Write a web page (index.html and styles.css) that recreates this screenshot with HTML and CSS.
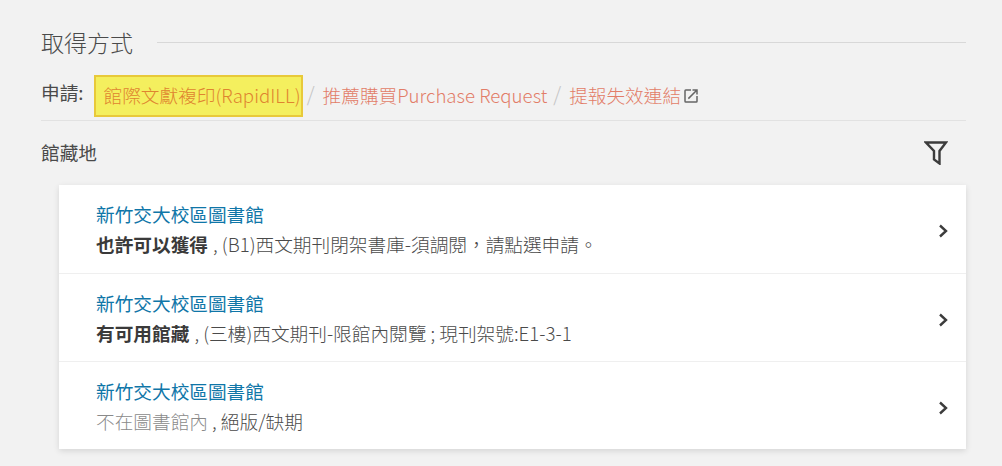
FILE: index.html
```html
<!DOCTYPE html>
<html lang="zh-Hant">
<head>
    <meta charset="UTF-8">
    <title>取得方式</title>
    <link rel="stylesheet" href="styles.css">
</head>
<body>
    <!-- Section title -->
    <div class="title-row">
        <h2 class="title">取得方式</h2>
        <div class="title-line"></div>
    </div>

    <!-- Request links -->
    <div class="request-row">
        <span class="request-label">申請:</span>
        <a class="request-link highlighted">館際文獻複印(RapidILL)</a>
        <span class="sep">/</span>
        <a class="request-link">推薦購買Purchase Request</a>
        <span class="sep">/</span>
        <a class="request-link">提報失效連結<svg class="ext-icon" viewBox="0 0 24 24" width="18" height="18"><path d="M19 19H5V5h7V3H5a2 2 0 0 0-2 2v14a2 2 0 0 0 2 2h14a2 2 0 0 0 2-2v-7h-2v7zM14 3v2h3.590l-9.830 9.830 1.410 1.410L19 6.410V10h2V3h-7z"/></svg></a>
    </div>

    <!-- Location header -->
    <div class="loc-header">
        <span class="loc-title">館藏地</span>
        <svg class="filter-icon" viewBox="0 0 24 24" width="24" height="24"><path d="M2 1.500H22L15.500 10V22.500L10 18.500V10Z"/></svg>
    </div>

    <!-- Location list -->
    <div class="loc-list">
        <div class="loc-item">
            <div class="loc-text">
                <div class="loc-name">新竹交大校區圖書館</div>
                <div class="loc-status"><strong>也許可以獲得</strong> , (B1)西文期刊閉架書庫-須調閱，請點選申請。</div>
            </div>
            <svg class="chevron" viewBox="0 0 24 24" width="24" height="24"><path d="M9 6.500l6 5.500-6 5.500"/></svg>
        </div>
        <div class="loc-item">
            <div class="loc-text">
                <div class="loc-name">新竹交大校區圖書館</div>
                <div class="loc-status"><strong>有可用館藏</strong> , (三樓)西文期刊-限館內閱覽 ; 現刊架號:E1-3-1</div>
            </div>
            <svg class="chevron" viewBox="0 0 24 24" width="24" height="24"><path d="M9 6.500l6 5.500-6 5.500"/></svg>
        </div>
        <div class="loc-item">
            <div class="loc-text">
                <div class="loc-name">新竹交大校區圖書館</div>
                <div class="loc-status"><span class="muted">不在圖書館內</span> , 絕版/缺期</div>
            </div>
            <svg class="chevron" viewBox="0 0 24 24" width="24" height="24"><path d="M9 6.500l6 5.500-6 5.500"/></svg>
        </div>
    </div>
</body>
</html>
```

FILE: styles.css
```css
* {
    margin: 0;
    padding: 0;
    box-sizing: border-box;
    font-family: 'Noto Sans CJK TC', sans-serif;
}

body {
    background: #f2f2f2;
    color: #4a4a4a;
    font-weight: 300;
    padding: 23px 36px 0 41px;
    height: 466px;
    overflow: hidden;
}

/* Title */
.title-row {
    display: flex;
    align-items: center;
    gap: 24px;
    height: 38px;
}

.title {
    font-size: 23px;
    font-weight: 300;
    color: #4a4a4a;
}

.title-line {
    flex: 1;
    border-top: 1px solid #d8d8d8;
}

/* Request row */
.request-row {
    display: flex;
    align-items: center;
    height: 60px;
    padding-top: 11px;
    border-bottom: 1px solid #e2e2e2;
    font-size: 18.670px;
}

.request-label {
    font-weight: 400;
    margin-right: 10px;
    position: relative;
    top: -5px;
}

.request-link {
    color: #e27d68;
    padding-bottom: 4px;
}

.highlighted {
    background: #f4ef5e;
    border: 2px solid #e8c93a;
    padding: 4px 0 6px 8px;
    margin-right: -2px;
    color: #df8430;
    line-height: 28px;
}

.sep {
    color: #c4c4c4;
    margin: 0 8px 0 6px;
    font-size: 20px;
    position: relative;
    top: -3px;
}

.ext-icon {
    fill: #666;
    vertical-align: -2px;
    margin-left: 1px;
}

/* Location header */
.loc-header {
    display: flex;
    justify-content: space-between;
    align-items: center;
    height: 64px;
    padding: 0 18px 0 0;
    font-size: 18.670px;
    font-weight: 400;
}

.loc-title {
    margin-bottom: 4px;
}

.filter-icon {
    fill: none;
    stroke: #3c3c3c;
    stroke-width: 2.400;
}

/* List */
.loc-list {
    margin-left: 18px;
    background: #fff;
    box-shadow: 0 2px 6px rgba(0, 0, 0, 0.12);
}

.loc-item {
    display: flex;
    justify-content: space-between;
    align-items: center;
    height: 88px;
    padding: 0 11px 0 37px;
    border-bottom: 1px solid #efefef;
}

.loc-item:first-child {
    height: 89px;
    padding-bottom: 1px;
}

.loc-item:last-child {
    height: 87px;
    border-bottom: none;
}

.loc-name {
    color: #0f76a8;
    font-size: 18.670px;
    font-weight: 400;
    line-height: 30px;
}

.loc-status {
    font-size: 18.670px;
    line-height: 30px;
}

.loc-status strong {
    font-weight: 700;
    color: #3a3a3a;
    margin-right: 1px;
}

.muted {
    color: #8a8a8a;
}

.chevron {
    fill: none;
    stroke: #3c3c3c;
    stroke-width: 2.400;
    margin-top: 4px;
}
```
